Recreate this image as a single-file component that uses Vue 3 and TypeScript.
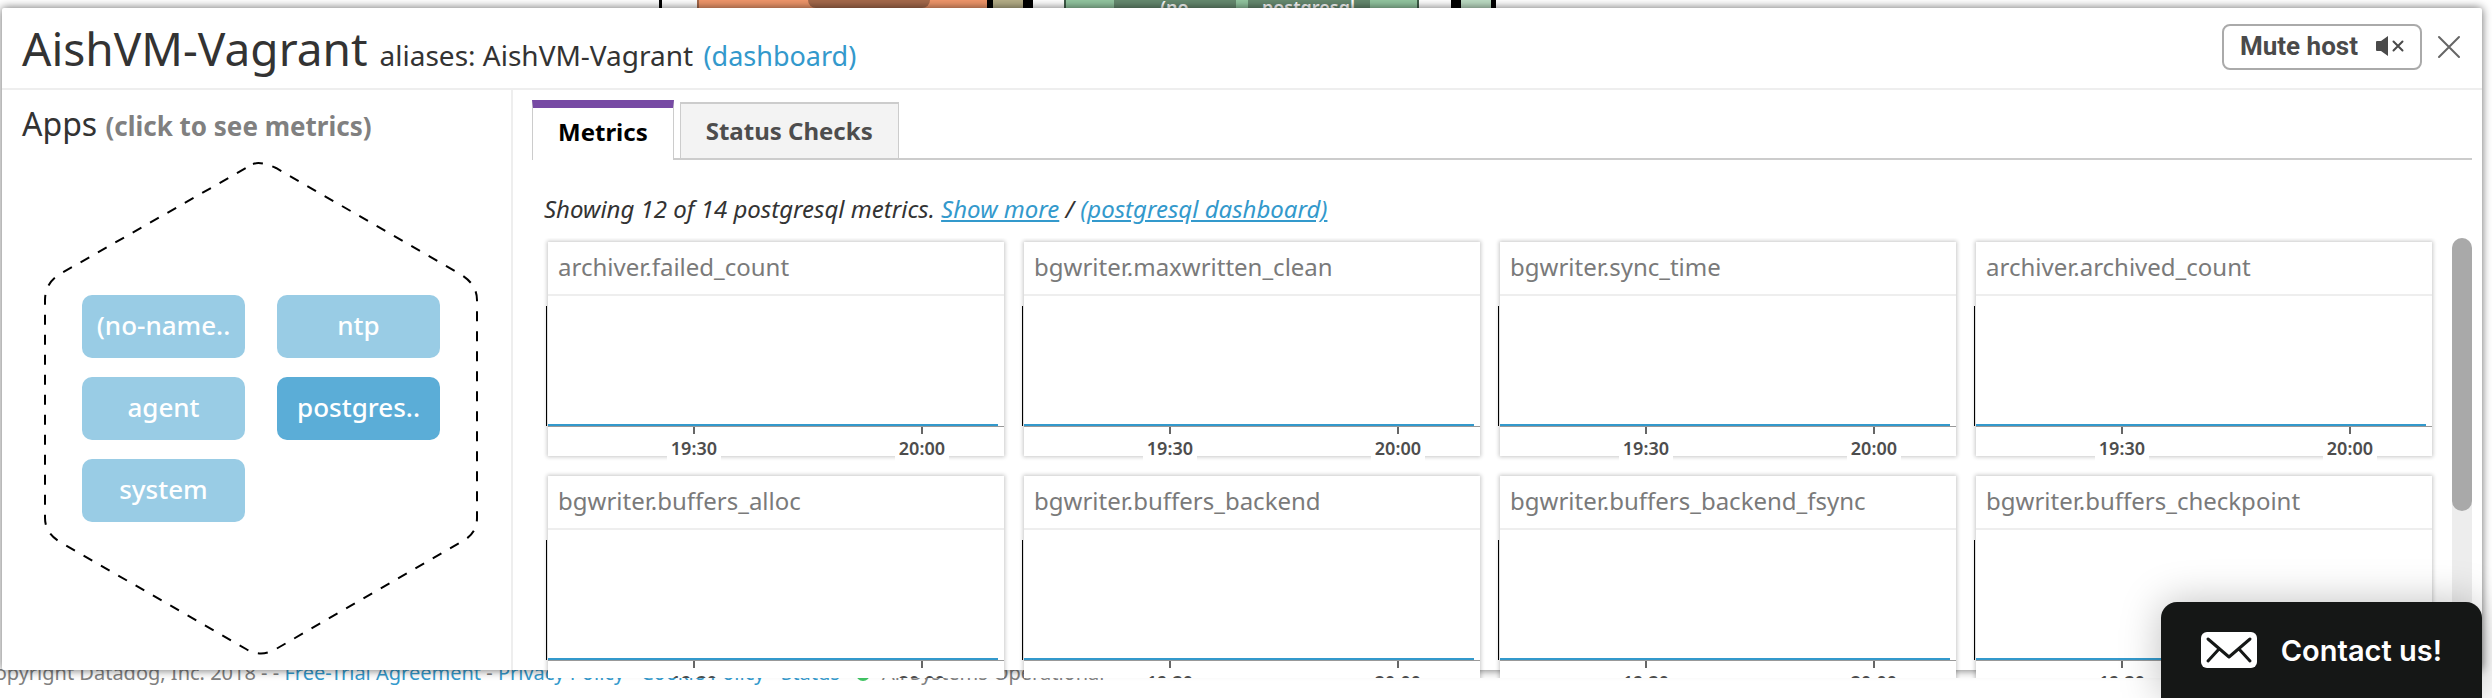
<script setup lang="ts">
import { ref } from 'vue'

const apps = ['(no-name..', 'ntp', 'agent', 'postgres..', 'system']
const selected = ref('postgres..')
const tabs = ['Metrics', 'Status Checks']
const activeTab = ref('Metrics')
const metrics = [
  'archiver.failed_count',
  'bgwriter.maxwritten_clean',
  'bgwriter.sync_time',
  'archiver.archived_count',
  'bgwriter.buffers_alloc',
  'bgwriter.buffers_backend',
  'bgwriter.buffers_backend_fsync',
  'bgwriter.buffers_checkpoint',
]
const ticks = [
  { label: '19:30', at: 32 },
  { label: '20:00', at: 82 },
]
</script>

<template>
  <div class="page">
    <div class="hostmap" aria-hidden="true">
      <i class="edge"></i>
      <div class="hex orange"><span class="chip brown"></span></div>
      <div class="hex khaki"></div>
      <div class="hex green">
        <span class="chip moss">(no</span>
        <span class="chip moss">postgresql</span>
      </div>
      <div class="hex mint"></div>
    </div>

    <main class="panel">
      <header class="head">
        <h1>AishVM-Vagrant</h1>
        <p class="aliases">aliases: AishVM-Vagrant <a href="#dashboard">(dashboard)</a></p>
        <button class="mute" type="button">
          Mute host
          <svg width="30" height="20" viewBox="0 0 30 20" aria-hidden="true">
            <path d="M2 5h4l7-5v20l-7-5h-4q-1 0-1-1v-8q0-1 1-1z" fill="#4a4a4a" />
            <path d="M18.500 5.500l9 9M27.500 5.500l-9 9" stroke="#4a4a4a" stroke-width="2" stroke-linecap="round" />
          </svg>
        </button>
        <button class="close" type="button" aria-label="Close">
          <svg width="24" height="24" viewBox="0 0 24 24" aria-hidden="true">
            <path d="M2 2l20 20M22 2l-20 20" stroke="#666" stroke-width="2" stroke-linecap="round" />
          </svg>
        </button>
      </header>

      <div class="body">
        <aside class="side">
          <h2>Apps <small>(click to see metrics)</small></h2>
          <div class="hexagon">
            <svg class="outline" width="436" height="496" viewBox="43 161 436 496" aria-hidden="true">
              <path
                d="M253 164Q261 161 276 168L460 274Q477 284 477 300V518Q477 533 463 541L276 649Q261 658 246 649L60 542Q45 533 45 518V300Q45 283 60 274L246 168L253 164"
                fill="none"
                stroke="#000"
                stroke-width="2"
                stroke-dasharray="10 10"
              />
            </svg>
            <div class="apps">
              <button
                v-for="app in apps"
                :key="app"
                type="button"
                class="app"
                :class="{ on: app === selected }"
                @click="selected = app"
              >
                {{ app }}
              </button>
            </div>
          </div>
        </aside>

        <section class="main">
          <div class="tabs" role="tablist">
            <button
              v-for="tab in tabs"
              :key="tab"
              type="button"
              role="tab"
              class="tab"
              :class="{ active: tab === activeTab }"
              :aria-selected="tab === activeTab"
              @click="activeTab = tab"
            >
              {{ tab }}
            </button>
          </div>
          <p class="showing">
            Showing 12 of 14 postgresql metrics. <a href="#more">Show more</a> /
            <a href="#postgresql">(postgresql dashboard)</a>
          </p>
          <div class="scroller">
            <div class="grid">
              <article v-for="metric in metrics" :key="metric" class="card">
                <h3>{{ metric }}</h3>
                <div class="plot"><div class="series"></div></div>
                <div class="axis">
                  <span v-for="tick in ticks" :key="tick.label" class="tick" :style="{ left: tick.at + '%' }">{{
                    tick.label
                  }}</span>
                </div>
              </article>
            </div>
            <div class="track"><div class="thumb"></div></div>
          </div>
        </section>
      </div>
    </main>

    <footer class="foot">
      <span>Copyright Datadog, Inc. 2018 - - <a href="#trial">Free-Trial Agreement</a> - <a href="#privacy">Privacy Policy</a> - <a href="#cookie">Cookie Policy</a> - <a href="#status">Status</a></span>
      <i class="dot"></i>
      <span>All Systems Operational</span>
    </footer>

    <button class="contact" type="button">
      <svg width="56" height="36" viewBox="0 0 56 36" aria-hidden="true">
        <rect width="56" height="36" rx="6" fill="#fff" />
        <path d="M7 7L28 25L49 7M7 29L18 17M49 29L38 17" fill="none" stroke="#151716" stroke-width="3" stroke-linecap="round" stroke-linejoin="round" />
      </svg>
      Contact us!
    </button>
  </div>
</template>

<style>
body {
  margin: 0;
  background: #fff;
}
</style>

<style scoped>
* {
  box-sizing: border-box;
}
.page {
  position: relative;
  height: 100vh;
  overflow: hidden;
  font-family: 'Noto Sans', sans-serif;
  color: #333;
}
button {
  font-family: inherit;
  cursor: pointer;
}
a {
  color: #3399cc;
  text-decoration: none;
}
h1,
h2,
h3,
p {
  margin: 0;
  font-weight: 400;
}
.hostmap {
  display: flex;
  height: 8px;
  padding-left: 659px;
  overflow: hidden;
}
.edge {
  width: 3px;
  margin-right: 35px;
  background: #000;
}
.hex {
  display: flex;
  justify-content: center;
  gap: 12px;
}
.orange {
  justify-content: flex-start;
  width: 290px;
  padding-left: 109px;
  background: #f0976b;
  border-left: 2px solid #a5694b;
}
.khaki {
  width: 46px;
  margin-right: 31px;
  background: #b5ae88;
  border: solid #000;
  border-width: 0 10px 0 6px;
}
.green {
  width: 355px;
  margin-right: 32px;
  background: #92c6a0;
  border: solid #3f5c48;
  border-width: 0 2px;
}
.mint {
  width: 45px;
  background: #bcdcc4;
  border: solid #000;
  border-width: 0 5px 0 10px;
}
.chip {
  width: 122px;
  height: 8px;
  font-size: 18px;
  font-weight: 600;
  line-height: 14px;
  text-align: center;
  color: #fff;
}
.brown {
  background: #a5694b;
  border-radius: 0 0 8px 8px;
}
.moss {
  background: #668a70;
}
.panel {
  position: relative;
  display: flex;
  flex-direction: column;
  height: calc(100vh - 36px);
  margin: 0 10px 0 2px;
  background: #fff;
  border-radius: 2px;
  box-shadow: 0 0 10px rgba(0, 0, 0, 0.6);
}
.head {
  display: flex;
  align-items: center;
  height: 82px;
  padding: 0 20px;
  border-bottom: 2px solid #eee;
}
h1 {
  font-size: 46px;
  line-height: 80px;
}
.aliases {
  flex: 1;
  padding: 14px 0 0 12px;
  font-size: 28px;
  line-height: 40px;
}
.aliases a {
  margin-left: 3px;
  font-size: 27px;
}
.mute {
  display: flex;
  align-items: center;
  gap: 17px;
  height: 46px;
  margin: 0 15px 2px 0;
  padding: 0 15px 2px 16px;
  border: 2px solid #aaa;
  border-radius: 8px;
  background: #fff;
  color: #4a4a4a;
  font-family: Roboto, sans-serif;
  font-size: 26px;
  font-weight: 700;
}
.close {
  display: flex;
  margin: 0 1px 2px 0;
  padding: 0;
  border: 0;
  background: none;
}
.body {
  display: flex;
  flex: 1;
  min-height: 0;
}
.side {
  flex: none;
  width: 511px;
  padding: 9px 0 0 20px;
  border-right: 2px solid #eee;
}
h2 {
  font-size: 32px;
  line-height: 50px;
}
small {
  font-size: 26px;
  font-weight: 700;
  color: #808080;
}
.hexagon {
  position: relative;
  width: 436px;
  margin: 10px 0 0 21px;
  padding: 134px 39px;
}
.outline {
  position: absolute;
  top: 0;
  left: 0;
}
.apps {
  position: relative;
  display: grid;
  grid-template-columns: 1fr 1fr;
  gap: 19px 32px;
}
.app {
  height: 63px;
  padding: 0 0 4px;
  border: 0;
  border-radius: 10px;
  background: #99cce5;
  color: #fff;
  font-size: 26px;
  font-weight: 500;
}
.app.on {
  background: #5badd7;
}
.main {
  display: flex;
  flex: 1;
  flex-direction: column;
  min-width: 0;
  padding: 10px 10px 0 19px;
}
.tabs {
  display: flex;
  align-items: flex-end;
  flex: none;
  gap: 6px;
  height: 60px;
  border-bottom: 2px solid #ccc;
}
.tab {
  height: 56px;
  padding: 0 25px 2px;
  border: 1px solid #ccc;
  border-top-width: 2px;
  border-bottom: 0;
  background: #f3f3f3;
  color: #4d4d4d;
  font-size: 24px;
  font-weight: 700;
}
.tab.active {
  height: 60px;
  margin-bottom: -2px;
  padding-bottom: 6px;
  border-top: 8px solid #774aa4;
  background: #fff;
  color: #000;
}
.showing {
  padding: 31px 0 11px 12px;
  font-size: 24px;
  font-style: italic;
  line-height: 36px;
}
.showing a {
  text-decoration: underline;
}
.scroller {
  display: flex;
  flex: 1;
  gap: 16px;
  min-height: 0;
  margin-bottom: -8px;
  overflow: hidden;
}
.grid {
  display: grid;
  flex: 1;
  grid-template-columns: repeat(4, 1fr);
  align-content: start;
  gap: 20px;
  padding: 4px 4px 0 16px;
}
.card {
  height: 214px;
  background: #fff;
  box-shadow: 0 0 4px 1px rgba(0, 0, 0, 0.22);
}
h3 {
  height: 54px;
  padding: 0 10px;
  border-bottom: 2px solid #eee;
  font-size: 24px;
  line-height: 50px;
  color: #7a7a7a;
}
.plot {
  display: flex;
  align-items: flex-end;
  height: 120px;
  margin: 10px 0 0 -2px;
  border-left: 1px solid #000;
}
.series {
  width: 100%;
  height: 2px;
  margin: 0 6px 0 1px;
  background: #3399cc;
}
.axis {
  position: relative;
  height: 35px;
  border-top: 1px solid #999;
}
.tick {
  position: absolute;
  top: 8px;
  width: 54px;
  margin-left: -27px;
  background: #fff;
  color: #4d4d4d;
  font-size: 18px;
  font-weight: 600;
  line-height: 26px;
  text-align: center;
}
.tick::before {
  content: '';
  position: absolute;
  top: -8px;
  left: 26px;
  width: 2px;
  height: 7px;
  background: #666;
}
.track {
  width: 20px;
  border-radius: 10px 10px 0 0;
  background: #ededed;
}
.thumb {
  height: 62%;
  border-radius: 10px;
  background: #a9a9a9;
}
.foot {
  display: flex;
  align-items: center;
  margin: -12px 0 0 -18px;
  font-size: 20px;
  line-height: 30px;
  color: #808080;
  white-space: pre;
}
.dot {
  width: 14px;
  height: 14px;
  margin: 2px 12px 0 16px;
  border-radius: 7px;
  background: #41c464;
}
.contact {
  position: absolute;
  right: 10px;
  bottom: 0;
  display: flex;
  align-items: center;
  gap: 24px;
  height: 96px;
  padding: 0 40px;
  border: 0;
  border-radius: 16px 16px 0 0;
  background: #151716;
  box-shadow: 0 0 40px rgba(0, 0, 0, 0.25);
  color: #fff;
  font-family: Inter, sans-serif;
  font-size: 29px;
  font-weight: 600;
}
</style>
